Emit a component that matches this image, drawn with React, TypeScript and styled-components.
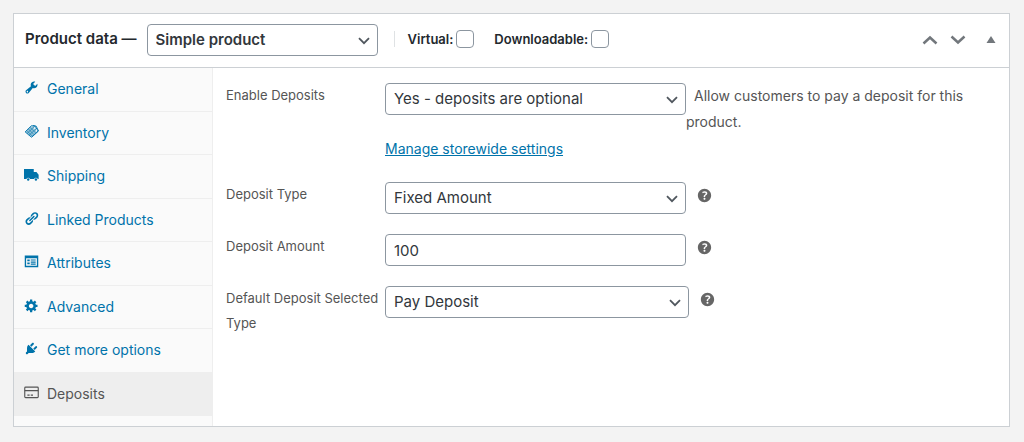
import React, { useState } from 'react';
import styled, { createGlobalStyle } from 'styled-components';

const GlobalStyle = createGlobalStyle`
  *, *::before, *::after { box-sizing: border-box; }
  body {
    margin: 0;
    background: #f3f3f3;
    color: #50575e;
    font-family: Inter, "Liberation Sans", sans-serif;
    font-size: 14px;
  }
`;

const Page = styled.main`
  padding: 13px 14px 15px 13px;
`;

const Panel = styled.section`
  background: #fff;
  border: 1px solid #ccd0d4;
`;

const Header = styled.header`
  display: flex;
  align-items: center;
  height: 54px;
  padding: 0 11px 2px 11px;
  border-bottom: 1px solid #ccd0d4;
  color: #23282d;
`;

const Title = styled.h2`
  margin: 0 10px 2px 0;
  font-size: 15px;
  font-weight: 600;
  line-height: 20px;
  white-space: nowrap;
`;

const SelectWrap = styled.div<{ $width: number }>`
  position: relative;
  flex: 0 1 ${(p) => p.$width}px;
  min-width: 0;
  height: 32px;
`;

const Select = styled.select<{ $strong?: boolean }>`
  appearance: none;
  display: block;
  width: 100%;
  height: 32px;
  margin: 0;
  padding: 0 28px 0 8px;
  border: 1px solid #8c96a0;
  border-radius: 4px;
  background: #fff;
  color: #32373c;
  font-family: inherit;
  font-size: 15px;
  font-weight: ${(p) => (p.$strong ? 600 : 400)};
  line-height: 30px;
`;

const SelectArrow = styled.svg`
  position: absolute;
  right: 8px;
  top: 13px;
  pointer-events: none;
`;

const TextInput = styled.input`
  flex: 0 1 301px;
  min-width: 0;
  height: 32px;
  margin: 0;
  padding: 0 8px;
  border: 1px solid #8c96a0;
  border-radius: 4px;
  background: #fff;
  color: #32373c;
  font-family: inherit;
  font-size: 15px;
  line-height: 30px;
`;

const Toggles = styled.div`
  display: flex;
  align-items: center;
  gap: 20px;
  height: 16px;
  margin: 0 0 2px 16px;
  padding-left: 13px;
  border-left: 1px solid #dfe2e4;
`;

const Toggle = styled.label`
  display: flex;
  align-items: center;
  gap: 3px;
  font-size: 13px;
  font-weight: 600;
  line-height: 18px;
`;

const Checkbox = styled.input`
  appearance: none;
  width: 18px;
  height: 18px;
  margin: 0;
  border: 1px solid #8c96a0;
  border-radius: 4px;
  background: #fff;
  &:checked { background: #0073aa; }
`;

const Actions = styled.div`
  display: flex;
  align-items: center;
  margin-left: auto;
`;

const IconButton = styled.button<{ $wide?: boolean }>`
  display: flex;
  align-items: center;
  justify-content: center;
  width: ${(p) => (p.$wide ? 28 : 14)}px;
  height: 28px;
  margin: 0;
  margin-left: ${(p) => (p.$wide ? 0 : 12)}px;
  padding: 0;
  border: 0;
  background: none;
  color: #72777c;
`;

const Body = styled.div`
  display: flex;
  align-items: stretch;
`;

const Tabs = styled.nav`
  flex: 0 0 199px;
  padding-bottom: 10px;
  border-right: 1px solid #eee;
  background: #fafafa;
`;

const TabList = styled.ul`
  display: grid;
  grid-auto-rows: 1fr;
  height: 348px;
  margin: 0;
  padding: 0;
  list-style: none;
`;

const Tab = styled.a<{ $active?: boolean }>`
  display: flex;
  align-items: center;
  gap: 8px;
  height: 100%;
  padding: 0 10px;
  border-bottom: 1px solid #eee;
  background: ${(p) => (p.$active ? '#eee' : 'transparent')};
  color: ${(p) => (p.$active ? '#555' : '#0073aa')};
  font-size: 14px;
  line-height: 20px;
  text-decoration: none;
`;

const TabIcon = styled.svg`
  flex: none;
  margin-bottom: 3px;
  overflow: visible;
`;

const Fields = styled.form`
  flex: 1;
  min-width: 0;
  padding: 5px 13px;
`;

const Field = styled.div`
  display: flex;
  align-items: flex-start;
  padding: 10px 0;
`;

const FieldLabel = styled.label`
  flex: 0 0 159px;
  height: 32px;
  padding-right: 2px;
  color: #555;
  font-size: 13px;
  line-height: 25px;
`;

const FieldContent = styled.div`
  flex: 1;
  min-width: 0;
`;

const ControlLine = styled.div`
  display: flex;
  flex: 1;
  align-items: flex-start;
  min-width: 0;
`;

const Description = styled.span`
  flex: 1;
  color: #555;
  font-size: 14px;
  line-height: 26px;
  text-indent: 8px;
`;

const SettingsLink = styled.a`
  display: inline-block;
  color: #0073aa;
  font-size: 14px;
  line-height: 27px;
`;

const Help = styled.button`
  display: flex;
  margin: 4px 0 0 9px;
  padding: 0;
  border: 0;
  background: none;
  color: #666;
`;

const dashicons = {
  wrench:
    'M16.68 9.77c-1.34 1.34-3.3 1.67-4.95.99l-5.41 6.52c-.99.99-2.59.99-3.58 0s-.99-2.59 0-3.57l6.52-5.42c-.68-1.65-.35-3.61.99-4.95 1.28-1.28 3.12-1.62 4.72-1.06l-2.89 2.89 2.82 2.82 2.86-2.87c.53 1.58.18 3.39-1.08 4.65zM3.81 16.21c.4.39 1.04.39 1.43 0 .4-.4.4-1.04 0-1.43-.39-.4-1.03-.4-1.43 0-.39.39-.39 1.03 0 1.43z',
  link:
    'M17.74 2.76c1.68 1.69 1.68 4.41 0 6.1l-1.53 1.52c-1.12 1.12-2.7 1.47-4.14 1.09l2.62-2.61.76-.77.76-.76c.84-.84.84-2.2 0-3.04-.84-.85-2.2-.85-3.04 0l-.77.76-3.38 3.38c-.37-1.44-.02-3.02 1.1-4.14l1.52-1.53c1.69-1.68 4.42-1.68 6.1 0zM8.59 13.43l5.34-5.34c.42-.42.42-1.1 0-1.52-.44-.43-1.13-.39-1.53 0l-5.33 5.34c-.42.42-.42 1.1 0 1.52.44.43 1.13.39 1.52 0zm-.76 2.29l4.14-4.15c.38 1.44.03 3.02-1.09 4.14l-1.52 1.53c-1.69 1.68-4.41 1.68-6.1 0-1.68-1.68-1.68-4.42 0-6.1l1.53-1.52c1.12-1.12 2.7-1.47 4.14-1.1l-4.14 4.15c-.85.84-.85 2.2 0 3.05.84.84 2.2.84 3.04 0z',
  gear:
    'M18 12h-2.18c-.17.7-.44 1.35-.81 1.93l1.54 1.54-2.1 2.1-1.54-1.54c-.58.36-1.23.63-1.91.79V19H8v-2.18c-.68-.16-1.33-.43-1.91-.79l-1.54 1.54-2.12-2.12 1.54-1.54c-.36-.58-.63-1.23-.79-1.91H1V9.03h2.17c.16-.7.44-1.35.8-1.94L2.43 5.55l2.1-2.1 1.54 1.54c.58-.37 1.24-.64 1.93-.81V2h3v2.18c.68.16 1.33.43 1.91.79l1.54-1.54 2.12 2.12-1.54 1.54c.36.59.64 1.24.8 1.94H18V12zm-8.5 1.5c1.66 0 3-1.34 3-3s-1.34-3-3-3-3 1.34-3 3 1.34 3 3 3z',
  plug:
    'M13.11 4.36L9.87 7.6 8 5.73l3.24-3.24c.35-.34 1.05-.2 1.56.32.52.51.66 1.21.31 1.55zm-8 1.77l.91-1.12 9.01 9.01-1.19.84c-.71.71-2.63 1.16-3.82 1.16H6.14L4.9 17.26c-.59.59-1.54.59-2.12 0-.59-.58-.59-1.53 0-2.12l1.24-1.24v-3.88c0-1.13.4-3.19 1.09-3.89zm7.26 3.97l3.24-3.24c.34-.35 1.04-.21 1.55.31.52.51.66 1.21.31 1.55l-3.24 3.25z',
  help:
    'M17 10c0-3.87-3.14-7-7-7-3.87 0-7 3.13-7 7s3.13 7 7 7c3.86 0 7-3.13 7-7zm-6.3 1.48H9.14v-.43c0-.38.08-.7.24-.98s.46-.57.88-.89c.41-.29.68-.53.81-.71.14-.18.2-.39.2-.62 0-.25-.09-.44-.28-.58-.19-.13-.45-.19-.79-.19-.58 0-1.25.15-2 .46l-.64-1.28c.87-.49 1.8-.74 2.77-.74.81 0 1.45.2 1.92.58.48.39.71.91.71 1.55 0 .43-.09.8-.29 1.11-.19.32-.57.67-1.11 1.06-.38.28-.61.49-.71.63-.1.15-.15.34-.15.57v.46zm-1.47 2.72c-.18-.17-.27-.42-.27-.73 0-.33.08-.58.26-.75s.43-.25.77-.25c.32 0 .57.09.75.26s.27.42.27.74c0 .3-.09.55-.27.72-.18.18-.43.27-.75.27-.33 0-.58-.09-.76-.26z',
};

const icons: Record<string, React.ReactNode> = {
  wrench: <path d={dashicons.wrench} />,
  tag: (
    <>
      <path d="M1.5 10.5 9 3l6.5.3.8 7.2L9.5 17z" fillOpacity=".4" />
      <path
        d="M1.5 10.5 10 2.2l4.6.6 4.2 6.4-9 8.3z"
        fill="none"
        stroke="currentColor"
        strokeWidth="1.2"
        strokeLinejoin="round"
      />
      <path
        d="M3.6 8.6l7.6 7.6M5.8 6.5l7.4 7.6M8 4.4l7.4 7.4M4 12.8l9.5-9.2M6.5 15.2 16.5 6"
        fill="none"
        stroke="currentColor"
        strokeWidth=".8"
      />
      <path d="M12 2l4.2.8 3.2 6.6-9 8" fill="none" stroke="currentColor" strokeWidth="1.2" />
      <circle cx="14.2" cy="5.4" r="1.1" fill="#fafafa" />
    </>
  ),
  truck: (
    <>
      <path d="M0 2.5h13v4h3.6l2.9 3.8V16h-1.2a2.5 2.5 0 0 0-4.8 0H8a2.5 2.5 0 0 0-4.8 0H0z" />
      <circle cx="5.6" cy="16.6" r="1.6" />
      <circle cx="15.9" cy="16.6" r="1.6" />
    </>
  ),
  link: <path d={dashicons.link} />,
  form: (
    <path
      fillRule="evenodd"
      d="M1 2h18v15.5H1zM2.8 5.8v9.9h14.4V5.8zM4.4 7.2h3.2v2.5H4.4zM4.4 11.2h3.2v2.5H4.4zM9 7.2h6.6v1.5H9zM9 10h6.6v1.5H9zM9 12.8h6.6v1.5H9z"
    />
  ),
  gear: <path d={dashicons.gear} />,
  plug: <path d={dashicons.plug} />,
  card: (
    <g fill="none" stroke="currentColor" strokeWidth="1.5">
      <rect x="1" y="2.8" width="18" height="14" rx="1.2" />
      <path d="M1 7.5h18M4.5 13.5h3M9 13.5h3" />
    </g>
  ),
};

const tabs = [
  { label: 'General', icon: 'wrench' },
  { label: 'Inventory', icon: 'tag' },
  { label: 'Shipping', icon: 'truck' },
  { label: 'Linked Products', icon: 'link' },
  { label: 'Attributes', icon: 'form' },
  { label: 'Advanced', icon: 'gear' },
  { label: 'Get more options', icon: 'plug' },
  { label: 'Deposits', icon: 'card' },
];

interface DropdownProps {
  id: string;
  options: string[];
  width?: number;
  strong?: boolean;
  label?: string;
}

function Dropdown({ id, options, width = 301, strong, label }: DropdownProps) {
  return (
    <SelectWrap $width={width}>
      <Select id={id} $strong={strong} aria-label={label}>
        {options.map((o) => (
          <option key={o}>{o}</option>
        ))}
      </Select>
      <SelectArrow width="12" height="8" viewBox="0 0 12 8" aria-hidden="true">
        <path d="M1 1.2l5 5 5-5" fill="none" stroke="#50575e" strokeWidth="1.8" />
      </SelectArrow>
    </SelectWrap>
  );
}

function HelpTip({ about }: { about: string }) {
  return (
    <Help type="button" aria-label={`Help: ${about}`}>
      <svg width="19" height="19" viewBox="0 0 20 20" fill="currentColor" aria-hidden="true">
        <path d={dashicons.help} />
      </svg>
    </Help>
  );
}

export default function App() {
  const [active, setActive] = useState('Deposits');
  return (
    <>
      <GlobalStyle />
      <Page>
        <Panel>
          <Header>
            <Title>Product data —</Title>
            <Dropdown
              id="product-type"
              label="Product type"
              width={231}
              strong
              options={['Simple product', 'Grouped product', 'Variable product']}
            />
            <Toggles>
              <Toggle>
                Virtual:
                <Checkbox type="checkbox" />
              </Toggle>
              <Toggle>
                Downloadable:
                <Checkbox type="checkbox" />
              </Toggle>
            </Toggles>
            <Actions>
              <IconButton type="button" $wide aria-label="Move up">
                <svg width="16" height="10" viewBox="0 0 16 10">
                  <path d="M1.5 8.5 8 2.5l6.5 6" fill="none" stroke="currentColor" strokeWidth="2.5" />
                </svg>
              </IconButton>
              <IconButton type="button" $wide aria-label="Move down">
                <svg width="16" height="10" viewBox="0 0 16 10">
                  <path d="M1.5 1.5l6.5 6 6.5-6" fill="none" stroke="currentColor" strokeWidth="2.5" />
                </svg>
              </IconButton>
              <IconButton type="button" aria-label="Toggle panel">
                <svg width="10" height="8" viewBox="0 0 10 8">
                  <path d="M5 0l4.5 7h-9z" fill="currentColor" />
                </svg>
              </IconButton>
            </Actions>
          </Header>
          <Body>
            <Tabs aria-label="Product data">
              <TabList>
                {tabs.map((t) => (
                  <li key={t.label}>
                    <Tab
                      href="#"
                      $active={t.label === active}
                      onClick={(e) => {
                        e.preventDefault();
                        setActive(t.label);
                      }}
                    >
                      <TabIcon width="15" height="15" viewBox="0 0 20 20" fill="currentColor" aria-hidden="true">
                        {icons[t.icon]}
                      </TabIcon>
                      {t.label}
                    </Tab>
                  </li>
                ))}
              </TabList>
            </Tabs>
            <Fields>
              <Field>
                <FieldLabel htmlFor="enable-deposits">Enable Deposits</FieldLabel>
                <FieldContent>
                  <ControlLine>
                    <Dropdown
                      id="enable-deposits"
                      options={['Yes - deposits are optional', 'Yes - deposits are required', 'No']}
                    />
                    <Description>Allow customers to pay a deposit for this product.</Description>
                  </ControlLine>
                  <SettingsLink href="#">Manage storewide settings</SettingsLink>
                </FieldContent>
              </Field>
              <Field>
                <FieldLabel htmlFor="deposit-type">Deposit Type</FieldLabel>
                <ControlLine>
                  <Dropdown id="deposit-type" options={['Fixed Amount', 'Percentage']} />
                  <HelpTip about="Deposit Type" />
                </ControlLine>
              </Field>
              <Field>
                <FieldLabel htmlFor="deposit-amount">Deposit Amount</FieldLabel>
                <ControlLine>
                  <TextInput id="deposit-amount" type="text" defaultValue="100" />
                  <HelpTip about="Deposit Amount" />
                </ControlLine>
              </Field>
              <Field>
                <FieldLabel htmlFor="default-type">Default Deposit Selected Type</FieldLabel>
                <ControlLine>
                  <Dropdown id="default-type" width={304} options={['Pay Deposit', 'Pay in Full']} />
                  <HelpTip about="Default Deposit Selected Type" />
                </ControlLine>
              </Field>
            </Fields>
          </Body>
        </Panel>
      </Page>
    </>
  );
}
